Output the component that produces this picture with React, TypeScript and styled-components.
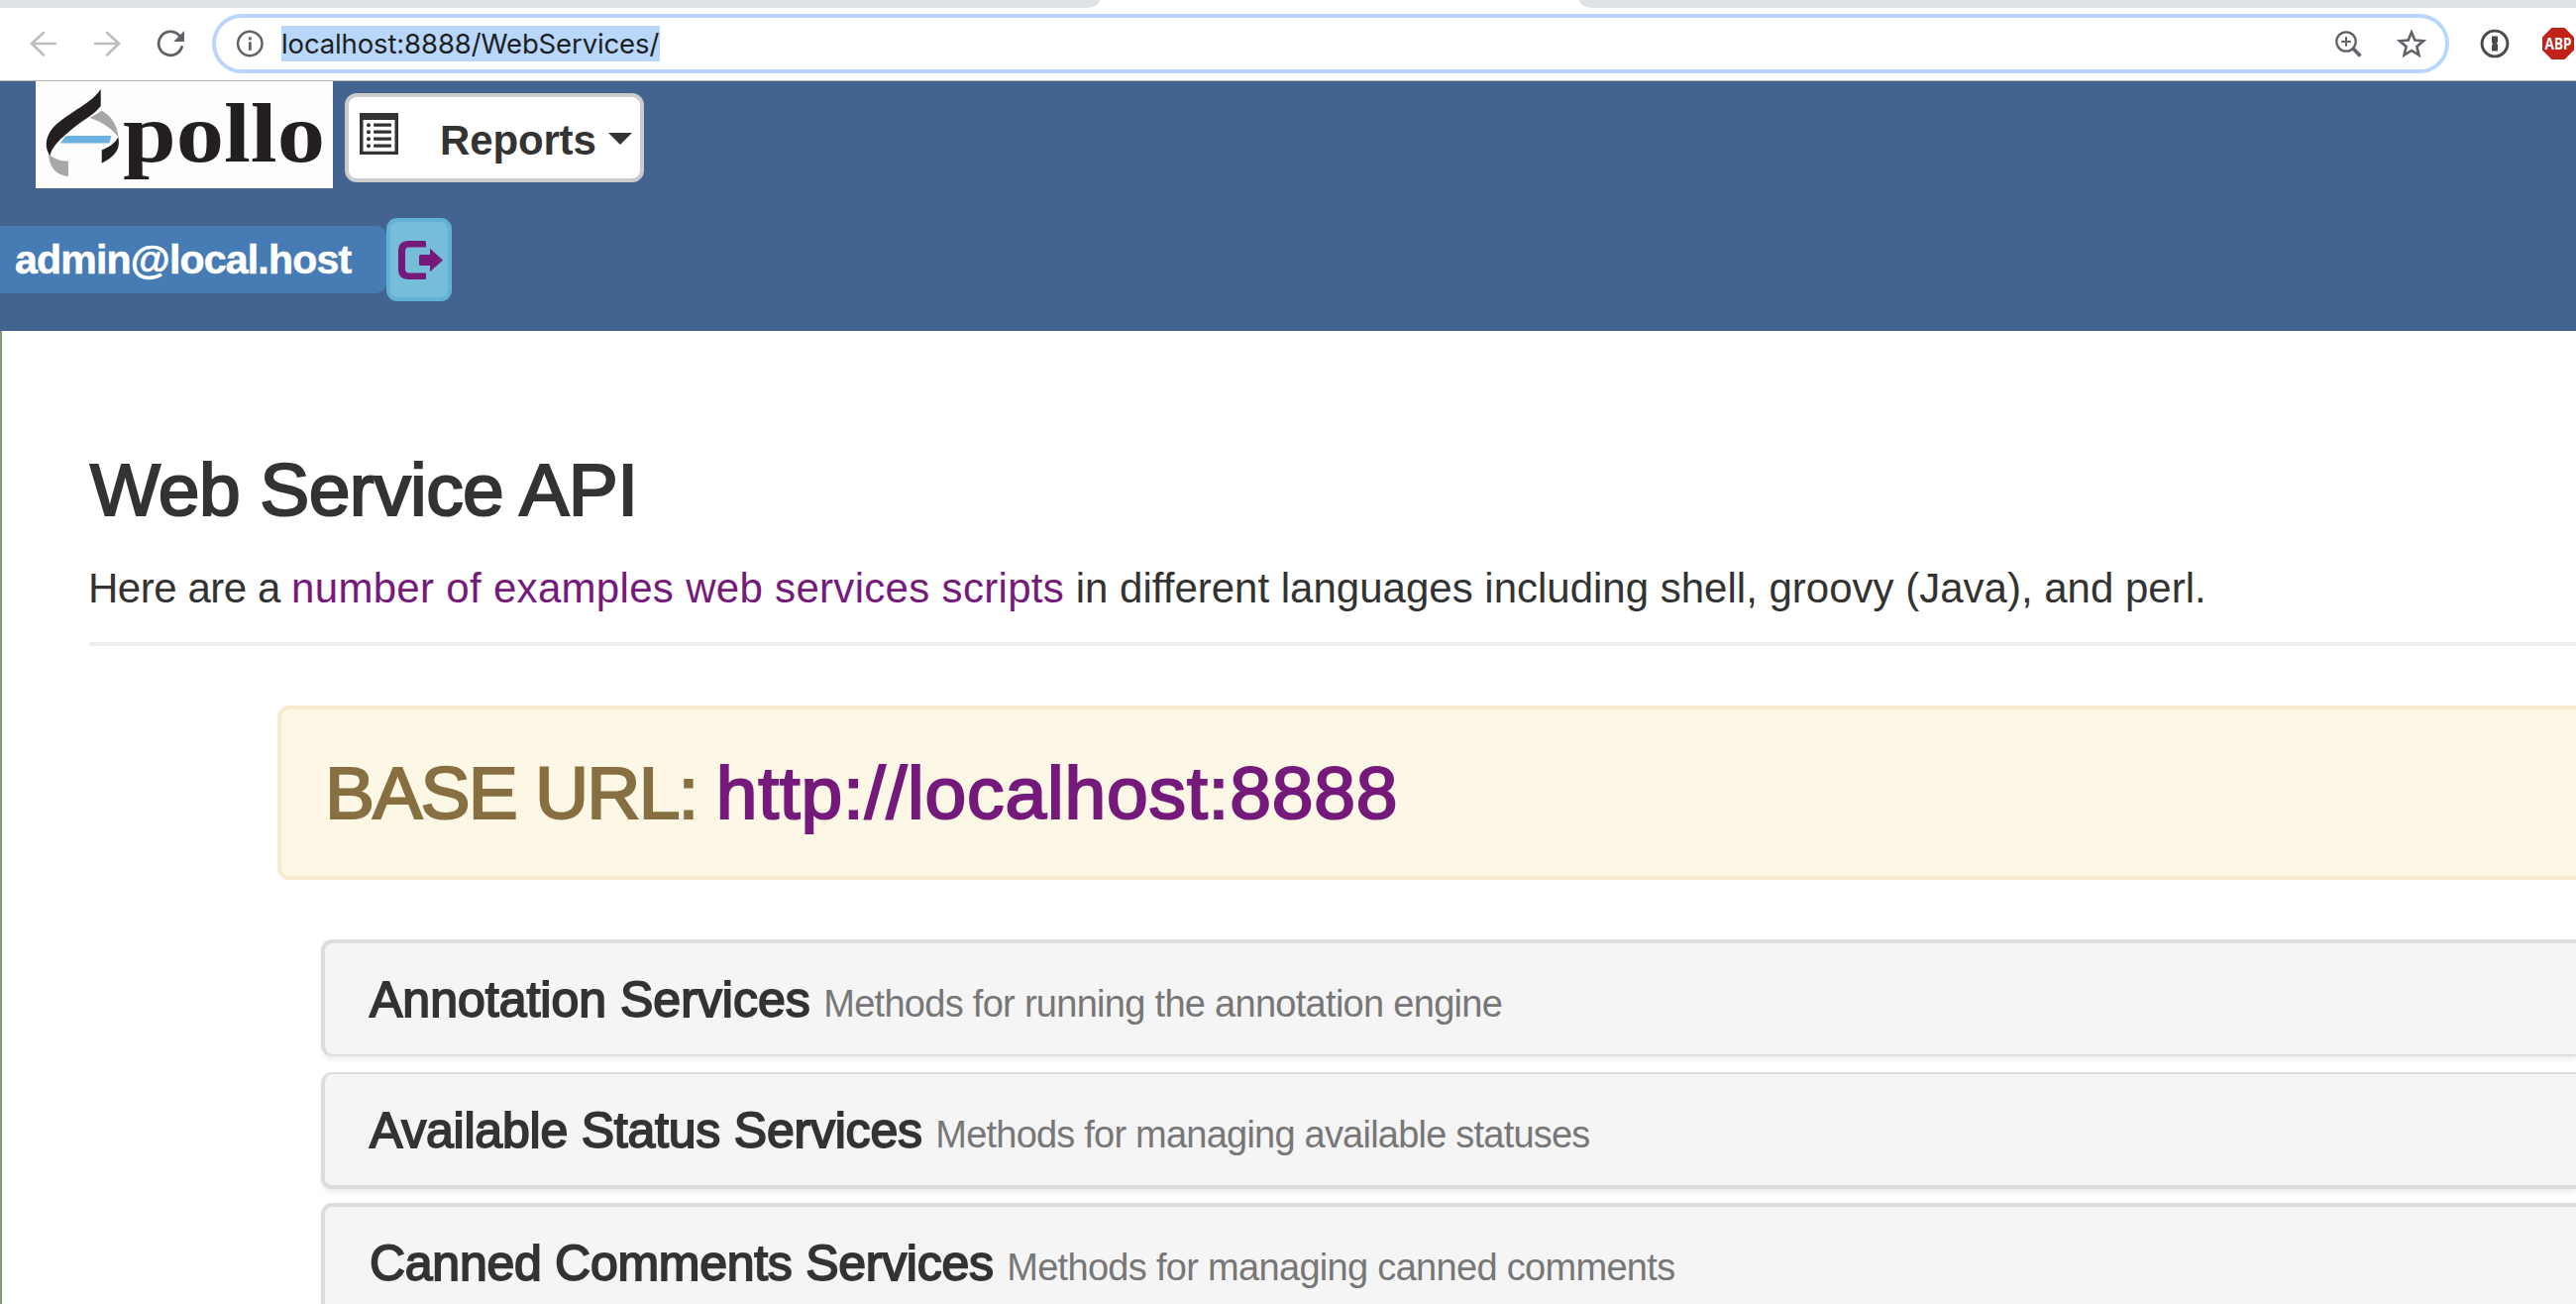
import React from "react";
import styled, { createGlobalStyle } from "styled-components";

const sans = `"Liberation Sans", Arial, sans-serif`;

const GlobalStyle = createGlobalStyle`
  *, *::before, *::after { box-sizing: border-box; }
  body { margin: 0; background: #fff; font-family: ${sans}; color: #333; }
  a { color: #751a7b; text-decoration: none; }
`;

const Window = styled.div`
  display: flex;
  flex-direction: column;
  width: 100%;
  height: 1316px;
  overflow: hidden;
  background: #fff;
`;

const TabStrip = styled.div`
  display: flex;
  flex: none;
  justify-content: space-between;
  height: 8px;
`;

const TabEdge = styled.div<{ $side: "left" | "right" }>`
  width: ${(p) => (p.$side === "left" ? 1110 : 1006)}px;
  background: #dee1e6;
  border-radius: ${(p) => (p.$side === "left" ? "0 0 14px 0 / 0 0 8px 0" : "0 0 0 14px / 0 0 0 8px")};
`;

const Toolbar = styled.div`
  display: flex;
  flex: none;
  align-items: center;
  height: 74px;
  padding: 0 2px 2px 30px;
  border-bottom: 1px solid #b4b8b9;
  svg { display: block; flex: none; }
`;

const NavButtons = styled.div`
  display: flex;
  flex: none;
  width: 184px;
  gap: 36px;
`;

const Omnibox = styled.div`
  display: flex;
  flex: none;
  align-items: center;
  width: 2258px;
  height: 60px;
  margin-top: 1px;
  padding: 0 19px 0 20px;
  border: 4px solid #b9d6fc;
  border-radius: 30px;
`;

const SelectedUrl = styled.span`
  height: 36px;
  margin: 0 auto 0 18px;
  padding-right: 1px;
  background: #b9d6fc;
  color: #1c1f22;
  font: 27.5px/36px Inter, sans-serif;
  letter-spacing: -0.13px;
  white-space: nowrap;
`;

const OmniActions = styled.div`
  display: flex;
  align-items: center;
  gap: 35px;
`;

const Extensions = styled.div`
  display: flex;
  flex: none;
  align-items: center;
  gap: 33px;
  margin-left: 31px;
`;

const Header = styled.header`
  flex: none;
  height: 252px;
  background: #436491;
`;

const BrandRow = styled.div`
  display: flex;
  align-items: flex-start;
  gap: 12px;
  padding-left: 36px;
`;

const LogoBox = styled.div`
  width: 300px;
  height: 108px;
  background: #fdfdfd;
  svg { display: block; }
`;

const ReportsButton = styled.button`
  display: flex;
  align-items: center;
  width: 302px;
  height: 90px;
  margin-top: 12px;
  padding: 0 0 0 11px;
  border: 4px solid #ccc;
  border-radius: 12px;
  background: #fff;
  color: #333;
  font: bold 42px/50px ${sans};
  letter-spacing: -0.15px;
`;

const ReportsLabel = styled.span`
  margin: 5px 0 0 42px;
`;

const ListIconWrap = styled.span`
  display: flex;
  margin-bottom: 8px;
`;

const Caret = styled.span`
  margin: 2px 0 0 12.5px;
  border-top: 12px solid #333;
  border-left: 12px solid transparent;
  border-right: 12px solid transparent;
`;

const UserRow = styled.div`
  display: flex;
  align-items: center;
  margin-top: 30px;
`;

const UserBadge = styled.div`
  width: 390px;
  height: 68px;
  padding-left: 15px;
  border-radius: 0 10px 10px 0;
  background: #467bb4;
  color: #fff;
  font: bold 41px/68px ${sans};
  letter-spacing: -0.8px;
  -webkit-text-stroke: 0.6px currentColor;
`;

const LogoutButton = styled.a`
  display: flex;
  align-items: center;
  justify-content: center;
  width: 66px;
  height: 84px;
  padding: 1px 0 0 3px;
  border: 4px solid #63b2d6;
  border-radius: 11px;
  background: #76bdd9;
`;

const Page = styled.main`
  flex: 1;
  min-height: 0;
  padding: 120px 0 0 88px;
  border-left: 2px solid #839a78;
`;

const Title = styled.h1`
  margin: 0 0 0 1px;
  font: 75px/80px ${sans};
  letter-spacing: -0.6px;
  -webkit-text-stroke: 2.2px currentColor;
`;

const Intro = styled.p`
  margin: 30px 0 24px -1px;
  font: 42px/60px ${sans};
  white-space: pre;
`;

const Run = styled.span<{ $track: number }>`
  letter-spacing: ${(p) => p.$track}px;
`;

const Rule = styled.hr`
  height: 4px;
  margin: 0;
  border: 0;
  background: #eee;
`;

const BaseUrl = styled.div`
  display: flex;
  align-items: center;
  height: 176px;
  margin: 60px 0 0 190px;
  padding-left: 44px;
  border: 4px solid #f9ebd0;
  border-right: 0;
  border-radius: 12px 0 0 12px;
  background: #fcf8e5;
  color: #886f42;
  font: 75px/80px ${sans};
  white-space: pre;
  -webkit-text-stroke: 2.2px currentColor;
`;

const Panels = styled.section`
  margin: 60px 0 0 234px;
`;

const Panel = styled.div<{ $top: number; $bottom: number; $gap: number }>`
  height: 118px;
  margin-bottom: ${(p) => p.$gap}px;
  padding-left: 45px;
  border: solid #ddd;
  border-width: ${(p) => p.$top}px 0 ${(p) => p.$bottom}px 4px;
  border-radius: 11px 0 0 11px;
  background: #f5f5f5;
  box-shadow: 0 4px 4px rgba(0, 0, 0, 0.06);
  font: 50px/115px ${sans};
  white-space: nowrap;
`;

const PanelTitle = styled.span<{ $track: number }>`
  margin-right: 13.5px;
  letter-spacing: ${(p) => p.$track}px;
  -webkit-text-stroke: 1.8px currentColor;
`;

const PanelNote = styled.small<{ $track: number }>`
  color: #777;
  font-size: 38px;
  letter-spacing: ${(p) => p.$track}px;
`;

const services = [
  { name: "Annotation Services", note: "Methods for running the annotation engine", nameTrack: 0, noteTrack: -0.71, top: 4, bottom: 2, gap: 16 },
  { name: "Available Status Services", note: "Methods for managing available statuses", nameTrack: -0.22, noteTrack: -0.78, top: 2, bottom: 4, gap: 14 },
  { name: "Canned Comments Services", note: "Methods for managing canned comments", nameTrack: -0.28, noteTrack: -0.69, top: 4, bottom: 2, gap: 16 },
];

const ArrowIcon = ({ flip = false }: { flip?: boolean }) => (
  <svg width="28" height="28" viewBox="0 0 28 28" fill="none" stroke="#bcbdbf" strokeWidth="2.6" strokeLinecap="round" strokeLinejoin="round">
    <path d={flip ? "M2 14H26M14 3L26 14L14 25.5" : "M26 14H2M14 3L2 14L14 25.5"} />
  </svg>
);

const ReloadIcon = () => (
  <svg width="28" height="28" viewBox="0 0 28 28">
    <path d="M25.500 17.5A12 12 0 1 1 23.200 6" fill="none" stroke="#5f6368" strokeWidth="2.8" strokeLinecap="round" />
    <path d="M28 1V12H17.200Z" fill="#5f6368" />
  </svg>
);

const InfoIcon = () => (
  <svg width="28" height="28" viewBox="0 0 28 28">
    <circle cx="14.300" cy="14" r="12.2" fill="none" stroke="#5f6368" strokeWidth="2.5" />
    <rect x="12.9" y="7.4" width="2.9" height="3" fill="#5f6368" />
    <rect x="12.9" y="12.4" width="2.9" height="8.4" fill="#5f6368" />
  </svg>
);

const ZoomIcon = () => (
  <svg width="28" height="28" viewBox="0 0 28 28" fill="none" stroke="#5f6368">
    <circle cx="12" cy="12" r="9.7" strokeWidth="2.3" />
    <path d="M12 7.2V16.8M7.2 12H16.8" strokeWidth="2" />
    <path d="M19 19L26.4 26.4" strokeWidth="3.6" />
  </svg>
);

const StarIcon = () => (
  <svg width="30" height="30" viewBox="0 0 30 30">
    <path d="M15 3.6L18.3 11.6L27 12.3L20.4 18L22.4 26.6L15 22L7.6 26.6L9.6 18L3 12.3L11.7 11.6Z" fill="none" stroke="#5f6368" strokeWidth="2.6" />
  </svg>
);

const OnePasswordIcon = () => (
  <svg width="30" height="30" viewBox="0 0 30 30">
    <circle cx="15" cy="15" r="12.9" fill="none" stroke="#4a4a4a" strokeWidth="2.9" />
    <path d="M12 7.4H18V13.4L16.8 14.6L18 16V22.6H12V16.8L13.2 15.4L12 14Z" fill="#4a4a4a" />
  </svg>
);

const AdblockIcon = () => (
  <svg width="32" height="32" viewBox="0 0 32 32">
    <path d="M9.4 0H22.6L32 9.4V22.6L22.6 32H9.4L0 22.6V9.4Z" fill="#c02418" />
    <text x="2.600" y="21.6" textLength="27" lengthAdjust="spacingAndGlyphs" fill="#fff" fontFamily="Open Sans, sans-serif" fontWeight="700" fontSize="16">ABP</text>
  </svg>
);

const ApolloLogo = () => (
  <svg width="300" height="108" viewBox="0 0 300 108">
    <path d="M54.7 37L66.7 29.7C75 34 82 42 83.6 57C79 50 70 42 54.7 37Z" fill="#a8a8a8" />
    <path d="M13 73C18 78.500 25 80.500 33 80.700V96C20 94.500 13.500 87 13 73Z" fill="#a8a8a8" />
    <path d="M65.700 8V25C58 35 46 40 37 48C25 58 16 66 14.600 75C10 69 9.500 61 13 54C21 36 54 26 65.700 8Z" fill="#231f20" />
    <path d="M30.500 55H76.500L74.500 62.600H25Z" fill="#6bb1e2" />
    <path d="M83.300 56.300C86 70 79 76 66.700 82.800V69.500C74 66.500 80 63 83.300 56.300Z" fill="#231f20" />
    <text x="88" y="81" textLength="204" lengthAdjust="spacingAndGlyphs" fill="#231f20" fontFamily="Liberation Serif, serif" fontWeight="700" fontSize="85">pollo</text>
  </svg>
);

const ListIcon = () => (
  <svg width="39" height="42" viewBox="0 0 39 42" fill="#333">
    <path fillRule="evenodd" d="M0 0H39V42H0ZM3.500 7V38.700H35.500V7Z" />
    {[12.2, 19.2, 26.2, 33.2].map((y) => (
      <g key={y}>
        <circle cx="9" cy={y} r="2" />
        <rect x="14" y={y - 1.6} width="18" height="3.200" rx="1" />
      </g>
    ))}
  </svg>
);

const LogoutIcon = () => (
  <svg width="45" height="39" viewBox="0 0 45 39" fill="#751a7b">
    <path d="M10.500 0H26.500Q28 0 28 1.500V6.500H11Q7 6.500 7 10.500V28.500Q7 32.500 11 32.500H28V37.500Q28 39 26.500 39H10.500Q0 39 0 28.500V10.500Q0 0 10.500 0Z" />
    <path d="M22.500 14H32V7.800L45 19.500L32 31.200V25H22.500Q21 25 21 23.500V15.500Q21 14 22.500 14Z" />
  </svg>
);

export default function App() {
  return (
    <Window>
      <GlobalStyle />
      <TabStrip>
        <TabEdge $side="left" />
        <TabEdge $side="right" />
      </TabStrip>
      <Toolbar>
        <NavButtons>
          <ArrowIcon />
          <ArrowIcon flip />
          <ReloadIcon />
        </NavButtons>
        <Omnibox>
          <InfoIcon />
          <SelectedUrl>localhost:8888/WebServices/</SelectedUrl>
          <OmniActions>
            <ZoomIcon />
            <StarIcon />
          </OmniActions>
        </Omnibox>
        <Extensions>
          <OnePasswordIcon />
          <AdblockIcon />
        </Extensions>
      </Toolbar>
      <Header>
        <BrandRow>
          <LogoBox>
            <ApolloLogo />
          </LogoBox>
          <ReportsButton>
            <ListIconWrap>
              <ListIcon />
            </ListIconWrap>
            <ReportsLabel>Reports</ReportsLabel>
            <Caret />
          </ReportsButton>
        </BrandRow>
        <UserRow>
          <UserBadge>admin@local.host</UserBadge>
          <LogoutButton href="#">
            <LogoutIcon />
          </LogoutButton>
        </UserRow>
      </Header>
      <Page>
        <Title>Web Service API</Title>
        <Intro>
          <Run $track={-0.46}>{"Here are a "}</Run>
          <a href="#">
            <Run $track={0.31}>number of examples web services scripts</Run>
          </a>
          <Run $track={0}>{" in different languages including shell, groovy (Java), and perl."}</Run>
        </Intro>
        <Rule />
        <BaseUrl>
          <Run $track={-1.8}>{"BASE URL: "}</Run>
          <a href="#">
            <Run $track={0.83}>http://localhost:8888</Run>
          </a>
        </BaseUrl>
        <Panels>
          {services.map((s) => (
            <Panel key={s.name} $top={s.top} $bottom={s.bottom} $gap={s.gap}>
              <PanelTitle $track={s.nameTrack}>{s.name}</PanelTitle>
              <PanelNote $track={s.noteTrack}>{s.note}</PanelNote>
            </Panel>
          ))}
        </Panels>
      </Page>
    </Window>
  );
}
